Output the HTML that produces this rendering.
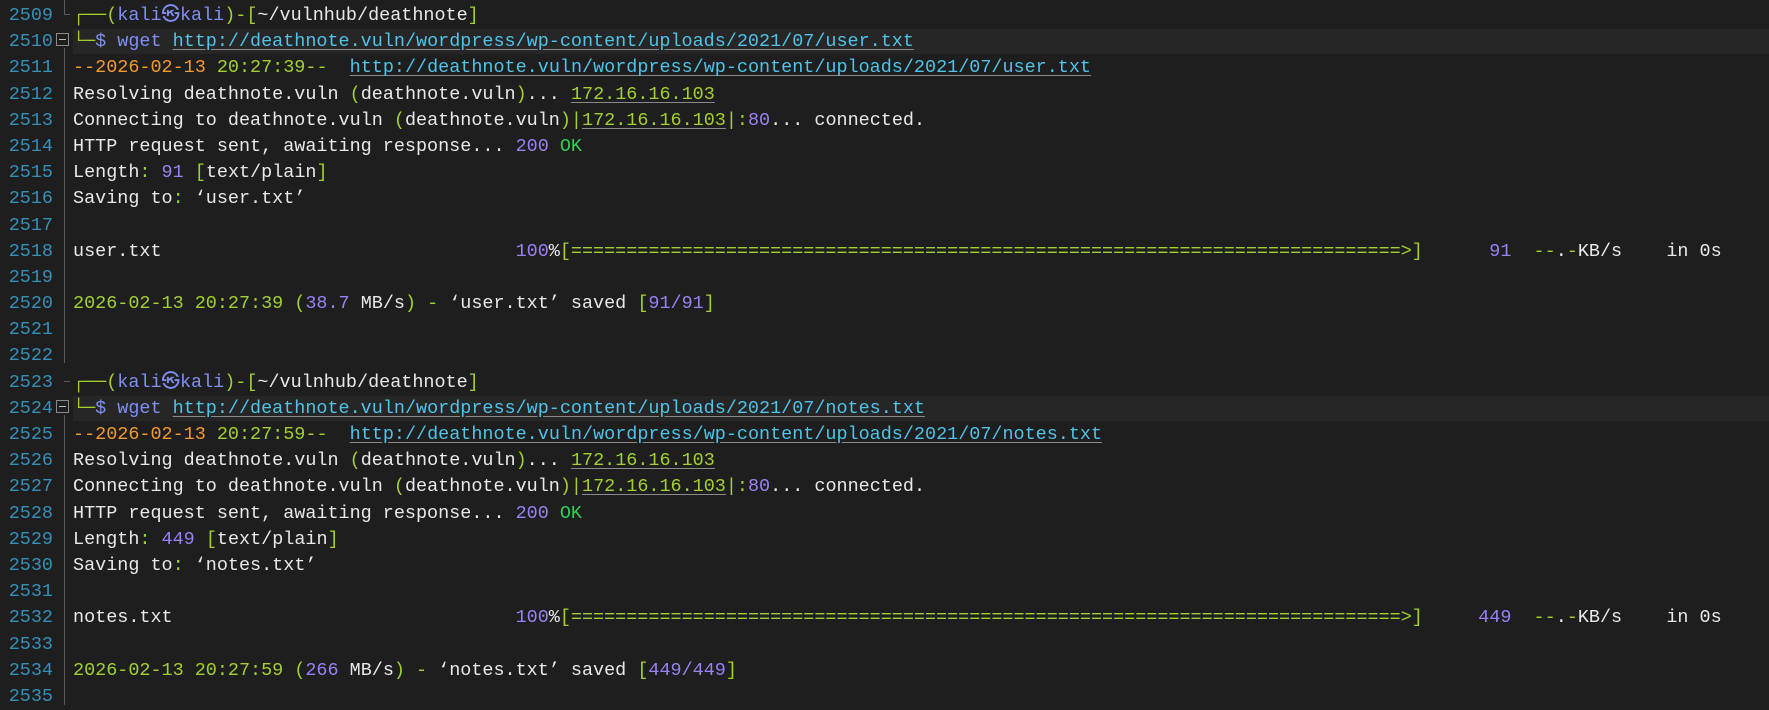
<!DOCTYPE html>
<html><head><meta charset="utf-8"><style>
html,body{margin:0;padding:0;background:#1e1e1e;width:1769px;height:699px;overflow:hidden}
#t{position:absolute;left:0;top:3px;width:1769px;font-family:"Liberation Mono",monospace;font-size:18.45px;line-height:26.2px;color:#e8e8e8}
.r{position:relative;height:26.2px;white-space:pre}
.n{position:absolute;left:0;top:0;width:53px;text-align:right;color:#3590b8}
.x{position:absolute;left:73px;top:0}
.hl{position:absolute;left:73px;right:0;top:0;height:25px;background:#262626}
.g{color:#a2d12f}.b{color:#7f8ff5}.c{color:#4fc3e8}.o{color:#f39a2c}.p{color:#9b80f6}.k{color:#33cc55}
.u{text-decoration:underline;text-decoration-color:#8a8a8a;text-underline-offset:3px}
.gl{position:absolute;left:64px;width:1px;background:#5a5a5a}
.fb{position:absolute;left:56px;width:13px;height:13px;border:1px solid #8a8a8a;box-sizing:border-box}
.fb:after{content:"";position:absolute;left:2px;right:2px;top:5px;height:1px;background:#bbb}
.cm{position:absolute;left:64px;width:6px;height:1px;background:#5a5a5a}
</style></head><body>
<div class="gl" style="top:0;height:14px"></div>
<div class="cm" style="top:14px"></div>
<div class="gl" style="top:48px;height:315px"></div>
<div class="cm" style="top:381px"></div>
<div class="gl" style="top:415px;height:290px"></div>
<div class="fb" style="top:33px"></div>
<div class="fb" style="top:400px"></div>
<div id="t"><div class="r"><span class="n">2509</span><span class="x"><span class="g">┌──(</span><span class="b">kali㉿kali</span><span class="g">)-[</span>~/vulnhub/deathnote<span class="g">]</span></span></div><div class="r"><div class="hl"></div><span class="n">2510</span><span class="x"><span class="g">└─</span><span class="b">$ wget </span><span class="c u">http://deathnote.vuln/wordpress/wp-content/uploads/2021/07/user.txt</span></span></div><div class="r"><span class="n">2511</span><span class="x"><span class="o">--2026-02-13</span> <span class="g">20:27:39--</span>  <span class="c u">http://deathnote.vuln/wordpress/wp-content/uploads/2021/07/user.txt</span></span></div><div class="r"><span class="n">2512</span><span class="x">Resolving deathnote.vuln <span class="g">(</span>deathnote.vuln<span class="g">)</span>... <span class="g u">172.16.16.103</span></span></div><div class="r"><span class="n">2513</span><span class="x">Connecting to deathnote.vuln <span class="g">(</span>deathnote.vuln<span class="g">)|</span><span class="g u">172.16.16.103</span><span class="g">|:</span><span class="p">80</span>... connected.</span></div><div class="r"><span class="n">2514</span><span class="x">HTTP request sent, awaiting response... <span class="p">200</span> <span class="k">OK</span></span></div><div class="r"><span class="n">2515</span><span class="x">Length<span class="g">:</span> <span class="p">91</span> <span class="g">[</span>text/plain<span class="g">]</span></span></div><div class="r"><span class="n">2516</span><span class="x">Saving to<span class="g">:</span> ‘user.txt’</span></div><div class="r"><span class="n">2517</span></div><div class="r"><span class="n">2518</span><span class="x">user.txt                                <span class="p">100</span>%<span class="g">[===========================================================================&gt;]</span>      <span class="p">91</span>  <span class="g">--</span>.<span class="g">-</span>KB/s    in 0s</span></div><div class="r"><span class="n">2519</span></div><div class="r"><span class="n">2520</span><span class="x"><span class="g">2026-02-13 20:27:39 (</span><span class="p">38.7</span> MB/s<span class="g">) - </span>‘user.txt’ saved <span class="g">[</span><span class="p">91/91</span><span class="g">]</span></span></div><div class="r"><span class="n">2521</span></div><div class="r"><span class="n">2522</span></div><div class="r"><span class="n">2523</span><span class="x"><span class="g">┌──(</span><span class="b">kali㉿kali</span><span class="g">)-[</span>~/vulnhub/deathnote<span class="g">]</span></span></div><div class="r"><div class="hl"></div><span class="n">2524</span><span class="x"><span class="g">└─</span><span class="b">$ wget </span><span class="c u">http://deathnote.vuln/wordpress/wp-content/uploads/2021/07/notes.txt</span></span></div><div class="r"><span class="n">2525</span><span class="x"><span class="o">--2026-02-13</span> <span class="g">20:27:59--</span>  <span class="c u">http://deathnote.vuln/wordpress/wp-content/uploads/2021/07/notes.txt</span></span></div><div class="r"><span class="n">2526</span><span class="x">Resolving deathnote.vuln <span class="g">(</span>deathnote.vuln<span class="g">)</span>... <span class="g u">172.16.16.103</span></span></div><div class="r"><span class="n">2527</span><span class="x">Connecting to deathnote.vuln <span class="g">(</span>deathnote.vuln<span class="g">)|</span><span class="g u">172.16.16.103</span><span class="g">|:</span><span class="p">80</span>... connected.</span></div><div class="r"><span class="n">2528</span><span class="x">HTTP request sent, awaiting response... <span class="p">200</span> <span class="k">OK</span></span></div><div class="r"><span class="n">2529</span><span class="x">Length<span class="g">:</span> <span class="p">449</span> <span class="g">[</span>text/plain<span class="g">]</span></span></div><div class="r"><span class="n">2530</span><span class="x">Saving to<span class="g">:</span> ‘notes.txt’</span></div><div class="r"><span class="n">2531</span></div><div class="r"><span class="n">2532</span><span class="x">notes.txt                               <span class="p">100</span>%<span class="g">[===========================================================================&gt;]</span>     <span class="p">449</span>  <span class="g">--</span>.<span class="g">-</span>KB/s    in 0s</span></div><div class="r"><span class="n">2533</span></div><div class="r"><span class="n">2534</span><span class="x"><span class="g">2026-02-13 20:27:59 (</span><span class="p">266</span> MB/s<span class="g">) - </span>‘notes.txt’ saved <span class="g">[</span><span class="p">449/449</span><span class="g">]</span></span></div><div class="r"><span class="n">2535</span></div></div>
</body></html>
